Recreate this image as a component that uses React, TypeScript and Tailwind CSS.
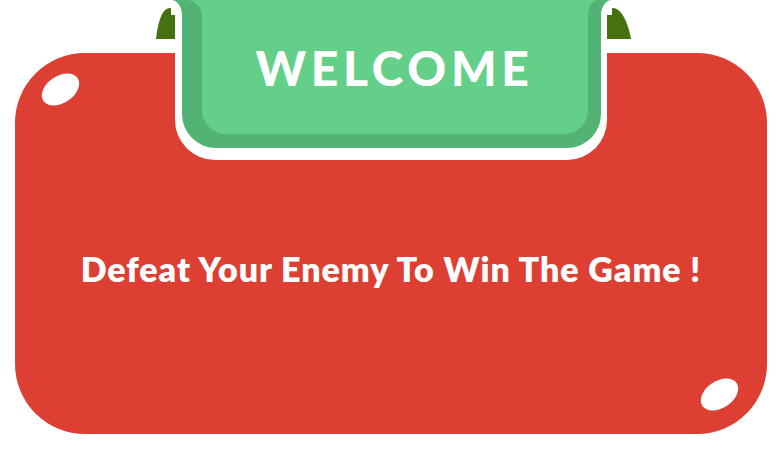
import React from "react";

export default function App() {
  return (
    <div className="relative w-[782px] h-[449px] bg-white overflow-hidden font-['Lato',sans-serif]">
      {/* red panel */}
      <div className="pt-[53px] pl-[15px]">
        <div className="relative w-[752px] h-[381px] rounded-[70px] bg-[#de3f33] pt-[199px]">
          <div className="absolute left-[25px] top-[23px] w-[41px] h-[27px] rounded-[50%] bg-white -rotate-[33deg]" />
          <div className="absolute left-[684px] top-[328px] w-[41px] h-[27px] rounded-[50%] bg-white -rotate-[33deg]" />
          <p className="text-center text-white font-extrabold text-[34px] leading-none tracking-[0.95px]">
            Defeat Your Enemy To Win The Game !
          </p>
        </div>
      </div>

      {/* olive tabs */}
      <svg className="absolute left-0 top-0" width="782" height="60" viewBox="0 0 782 60">
        <path d="M156 39 C158 22 162 8 170 8 C175 8 177 14 177 20 L177 39 Z" fill="#47700f" />
        <path d="M606 39 L606 20 C606 14 608 8 613 8 C621 8 628 22 631 39 Z" fill="#47700f" />
      </svg>

      {/* banner */}
      <div className="absolute left-[175px] top-0 w-[432px] h-[160px] flex bg-white rounded-b-[40px] pl-[7px] pr-[6px] pb-[12px]">
        <div className="flex flex-1 bg-[#53b374] rounded-b-[34px] pl-[20px] pr-[13px] pb-[14px]">
          <div className="flex-1 bg-[#63cf89] rounded-b-[24px] pt-[44px] pr-[1px] text-center text-white font-black text-[48px] leading-none tracking-[4.7px]">
            WELCOME
          </div>
        </div>
      </div>

      {/* top flares */}
      <div className="absolute left-[171px] top-0 w-[11px] h-[15px] bg-[#53b374]">
        <div className="w-full h-full bg-white rounded-tr-[11px_15px]" />
      </div>
      <div className="absolute left-[186px] top-0 w-[16px] h-[16px] bg-[#63cf89]">
        <div className="w-full h-full bg-[#53b374] rounded-tr-[16px_16px]" />
      </div>
      <div className="absolute left-[588px] top-0 w-[10px] h-[16px] bg-[#63cf89]">
        <div className="w-full h-full bg-[#53b374] rounded-tl-[10px_16px]" />
      </div>
      <div className="absolute left-[601px] top-0 w-[11px] h-[15px] bg-[#53b374]">
        <div className="w-full h-full bg-white rounded-tl-[11px_15px]" />
      </div>
    </div>
  );
}
